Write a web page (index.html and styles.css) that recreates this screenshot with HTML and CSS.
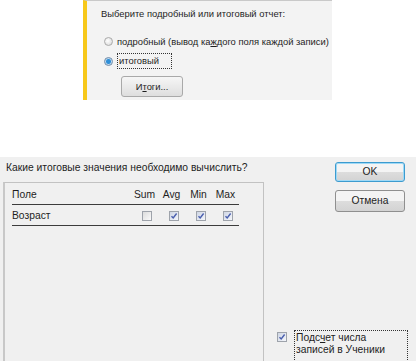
FILE: index.html
```html
<!DOCTYPE html>
<html lang="ru">
<head>
    <meta charset="UTF-8">
    <title>Итоги</title>
    <link rel="stylesheet" href="styles.css">
</head>
<body>

    <div class="report">
        <div class="report-body">
            <div class="report-title">Выберите подробный или итоговый отчет:</div>
            <div class="radio-row">
                <span class="radio"></span>
                <span>подробный (вывод ка<u>ж</u>дого поля каждой записи)</span>
            </div>
            <div class="radio-row">
                <span class="radio checked"></span>
                <span class="focus">итоговый</span>
            </div>
            <div class="btn-small">И<u>т</u>оги...</div>
        </div>
    </div>

    <div class="dialog">
        <div class="left">
            <div class="question">Какие итоговые значения необходимо вычислить?</div>
            <div class="frame">
                <div class="grid head">
                    <span>Поле</span>
                    <span class="col">Sum</span>
                    <span class="col">Avg</span>
                    <span class="col">Min</span>
                    <span class="col">Max</span>
                </div>
                <div class="grid">
                    <span>Возраст</span>
                    <span class="col"><span class="box"></span></span>
                    <span class="col"><span class="box on"></span></span>
                    <span class="col"><span class="box on"></span></span>
                    <span class="col"><span class="box on"></span></span>
                </div>
            </div>
        </div>
        <div class="right">
            <div class="btn default">OK</div>
            <div class="btn">Отмена</div>
            <div class="count">
                <span class="box on"></span>
                <span class="count-label">Подс<u>ч</u>ет числа<br>записей в Ученики</span>
            </div>
        </div>
    </div>

</body>
</html>
```

FILE: styles.css
```css
/* Page */
html, body {
    margin: 0;
    padding: 0;
    overflow: hidden;
    background: #ffffff;
    font-family: 'Liberation Sans', Arial, sans-serif;
    color: #1e1e1e;
}
u {
    text-decoration: underline;
    text-underline-offset: 1px;
}
/* Report type box at the top */
.report {
    margin-left: 83px;
    width: 245px;
    height: 99px;
    border-top: 1px solid #c9c9c9;
    border-left: 4px solid #f7c81a;
    background: #f3f3f3;
}
.report-body {
    padding: 6px 0 0 14px;
    font-size: 9.4px;
    white-space: nowrap;
}
.report-title {
    line-height: 14px;
    margin-bottom: 12px;
}
.radio-row {
    display: flex;
    align-items: center;
    gap: 4px;
    height: 16px;
    margin-left: 3px;
    margin-bottom: 4px;
}
.radio {
    width: 9px;
    height: 9px;
    border-radius: 50%;
    border: 1px solid #aaaaaa;
    background: radial-gradient(circle at 40% 40%, #ffffff, #d4d4d4);
    box-sizing: border-box;
    flex: none;
}
.radio.checked {
    border-color: #6f8aa8;
    background: radial-gradient(circle, #2f8fd8 0 2px, #bcd8ee 3px, #e8f1f8 5px);
}
.focus {
    border: 1px dotted #333;
    padding: 1px 12px 1px 1px;
    line-height: 12px;
}
.btn-small {
    margin: 7px 0 0 20px;
    width: 60px;
    height: 19px;
    border: 1px solid #a9a9a9;
    border-radius: 3px;
    background: linear-gradient(#f6f6f6, #dedede);
    line-height: 19px;
    text-align: center;
}
/* Summary dialog */
.dialog {
    margin-top: 57px;
    height: 215px;
    display: flex;
    background: #f0f0f0;
    font-size: 10.3px;
}
.left {
    width: 261px;
    padding-left: 3px;
    display: flex;
    flex-direction: column;
}
.question {
    padding: 4px 0 0 3px;
    line-height: 14px;
    margin-bottom: 7px;
}
.frame {
    flex: 1;
    border: 1px solid #c2c2c2;
    border-left: 2px solid #c8c8c8;
    border-bottom: none;
    padding-top: 1px;
}
.grid {
    display: grid;
    grid-template-columns: 1fr 27px 27px 27px 27px;
    align-items: center;
    height: 20px;
    margin-left: 7px;
    width: 227px;
    border-bottom: 1px solid #3c3c3c;
}
.col {
    text-align: center;
}
.box {
    display: inline-block;
    vertical-align: middle;
    width: 10px;
    height: 10px;
    box-sizing: border-box;
    border: 1px solid #9ea3ab;
    background: linear-gradient(135deg, #dcdcdc, #fafafa);
    margin-left: 4px;
}
.box.on {
    background: url("data:image/svg+xml,%3Csvg xmlns='http://www.w3.org/2000/svg' viewBox='0 0 8 8'%3E%3Cpath d='M1.5 4.2 L3.2 6 L6.6 1.5' fill='none' stroke='%234a5fae' stroke-width='1.4'/%3E%3C/svg%3E") center / 8px 8px no-repeat, linear-gradient(135deg, #cfd6e4, #f4f6fb);
}
.right {
    flex: 1;
    padding: 5px 0 0 71px;
    display: flex;
    flex-direction: column;
}
.btn {
    width: 70px;
    height: 22px;
    box-sizing: border-box;
    border: 1px solid #8f8f8f;
    border-radius: 3px;
    background: linear-gradient(#f4f4f4 50%, #dddddd 50%, #d3d3d3);
    text-align: center;
    line-height: 20px;
    margin-bottom: 7px;
}
.btn.default {
    height: 20px;
    line-height: 18px;
    border-color: #3c9bcf;
    box-shadow: inset 0 0 0 1px #9fd9f6;
    margin-bottom: 8px;
}
.count {
    margin: auto 0 12px -58px;
    display: flex;
    align-items: flex-start;
    height: 30px;
}
.count .box {
    margin: 2px 7px 0 0;
    flex: none;
}
.count-label {
    border: 1px dotted #333;
    border-bottom: none;
    padding: 1px 8px 0 1px;
    line-height: 12px;
    width: 103px;
    height: 40px;
}
```
